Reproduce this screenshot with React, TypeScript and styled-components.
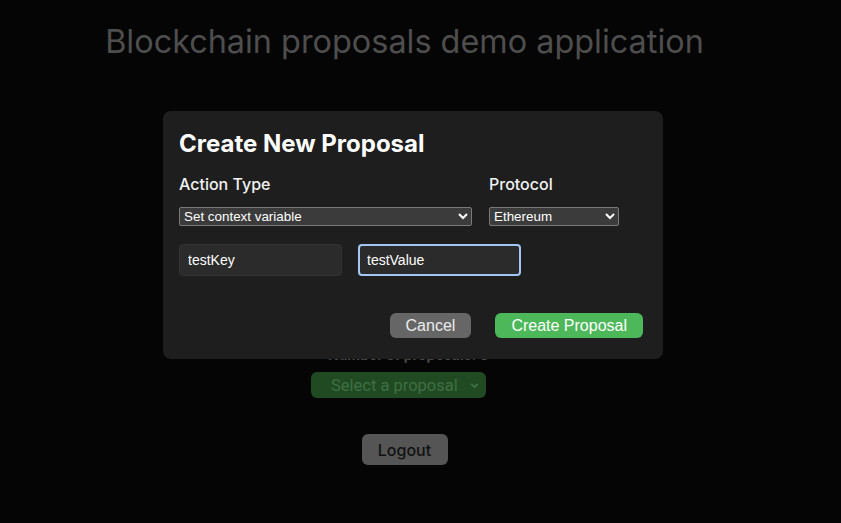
import React from "react";
import styled, { createGlobalStyle } from "styled-components";

const GlobalStyle = createGlobalStyle`
  html, body {
    margin: 0;
    padding: 0;
    background: #050505;
    font-family: Inter, "Liberation Sans", sans-serif;
  }
`;

const Page = styled.main`
  display: flex;
  flex-direction: column;
  align-items: center;
  padding-right: 32px;
  min-height: 523px;
  box-sizing: border-box;
`;

const PageTitle = styled.h1`
  margin: 22px 0 0;
  font-size: 32.4px;
  line-height: 40px;
  font-weight: 400;
  color: #4e4e4e;
`;

const Count = styled.p`
  margin: 285px 0 0;
  font-size: 14px;
  line-height: 16px;
  font-weight: 700;
  color: #4a4a4a;
  margin-right: -8px;
`;

const ProposalSelect = styled.div`
  margin-top: 9px;
  width: 175px;
  height: 26px;
  box-sizing: border-box;
  border-radius: 6px;
  background: #1f4a22;
  color: #3f6f43;
  font-size: 16.5px;
  font-family: Roboto, "Liberation Sans", sans-serif;
  display: flex;
  align-items: center;
  justify-content: space-between;
  padding: 0 6px 0 20px;
  margin-right: 12px;
`;

const LogoutButton = styled.button`
  margin-top: 36px;
  width: 86px;
  height: 31px;
  border: none;
  border-radius: 6px;
  background: #555555;
  color: #111111;
  font-family: Inter, "Liberation Sans", sans-serif;
  font-size: 16px;
  font-weight: 500;
`;

const Overlay = styled.div`
  position: fixed;
  inset: 0;
  display: flex;
  justify-content: center;
  align-items: flex-start;
  padding: 111px 15px 0 0;
`;

const Modal = styled.div`
  width: 500px;
  box-sizing: border-box;
  background: #1e1e1e;
  border-radius: 8px;
  padding: 18px 20px 21px 16px;
  color: #fff;
`;

const ModalTitle = styled.h2`
  margin: 0;
  font-size: 24px;
  line-height: 30px;
  font-weight: 700;
  color: #ffffff;
`;

const FieldRow = styled.div`
  display: flex;
  gap: 17px;
  margin-top: 15px;
`;

const Field = styled.label<{ $width: number }>`
  display: flex;
  flex-direction: column;
  width: ${(p) => p.$width}px;
`;

const Label = styled.span`
  font-size: 16px;
  line-height: 20px;
  font-weight: 500;
  color: #f2f2f2;
  margin-bottom: 13px;
`;

const NativeSelect = styled.select<{ $width: number }>`
  color-scheme: dark;
  width: ${(p) => p.$width}px;
  height: 19px;
  font-family: "Liberation Sans", Arial, sans-serif;
  font-size: 13.4px;
  background: #3b3b3b;
  color: #ffffff;
  border: 1px solid #7a7a7a;
  border-radius: 2px;
  padding: 0;
`;

const InputRow = styled.div`
  display: flex;
  gap: 16px;
  margin-top: 18px;
`;

const TextInput = styled.input<{ $active?: boolean }>`
  width: 163px;
  height: 32px;
  box-sizing: border-box;
  background: #2b2b2b;
  color: #ffffff;
  font-family: "Liberation Sans", Arial, sans-serif;
  font-size: 14px;
  border-radius: 4px;
  outline: none;
  border: ${(p) => (p.$active ? "2px solid #a4c6f3" : "1px solid #333333")};
  padding: ${(p) => (p.$active ? "0 7px" : "0 8px")};
  caret-color: #ffffff;
`;

const Actions = styled.div`
  display: flex;
  justify-content: flex-end;
  gap: 24px;
  margin-top: 37px;
`;

const ActionButton = styled.button<{ $primary?: boolean }>`
  height: 25px;
  padding: 0 16px;
  border: none;
  border-radius: 6px;
  font-family: "Liberation Sans", Arial, sans-serif;
  font-size: 16px;
  background: ${(p) => (p.$primary ? "#4db85a" : "#666666")};
  color: ${(p) => (p.$primary ? "#ffffff" : "#ececec")};
`;

const Chevron = () => (
  <svg width="11" height="11" viewBox="0 0 10 10">
    <path d="M2 3.5 L5 6.5 L8 3.5" fill="none" stroke="#3f6f43" strokeWidth="1.8" />
  </svg>
);

export default function App() {
  return (
    <>
      <GlobalStyle />
      <Page>
        <PageTitle>Blockchain proposals demo application</PageTitle>
        <Count>Number of proposals: 0</Count>
        <ProposalSelect>
          <span>Select a proposal</span>
          <Chevron />
        </ProposalSelect>
        <LogoutButton>Logout</LogoutButton>
      </Page>
      <Overlay>
        <Modal>
          <ModalTitle>Create New Proposal</ModalTitle>
          <FieldRow>
            <Field $width={293}>
              <Label>Action Type</Label>
              <NativeSelect $width={293} defaultValue="context">
                <option value="context">Set context variable</option>
                <option value="transfer">Transfer</option>
              </NativeSelect>
            </Field>
            <Field $width={158}>
              <Label>Protocol</Label>
              <NativeSelect $width={130} defaultValue="eth">
                <option value="eth">Ethereum</option>
                <option value="near">NEAR</option>
              </NativeSelect>
            </Field>
          </FieldRow>
          <InputRow>
            <TextInput defaultValue="testKey" />
            <TextInput $active defaultValue="testValue" />
          </InputRow>
          <Actions>
            <ActionButton>Cancel</ActionButton>
            <ActionButton $primary>Create Proposal</ActionButton>
          </Actions>
        </Modal>
      </Overlay>
    </>
  );
}
